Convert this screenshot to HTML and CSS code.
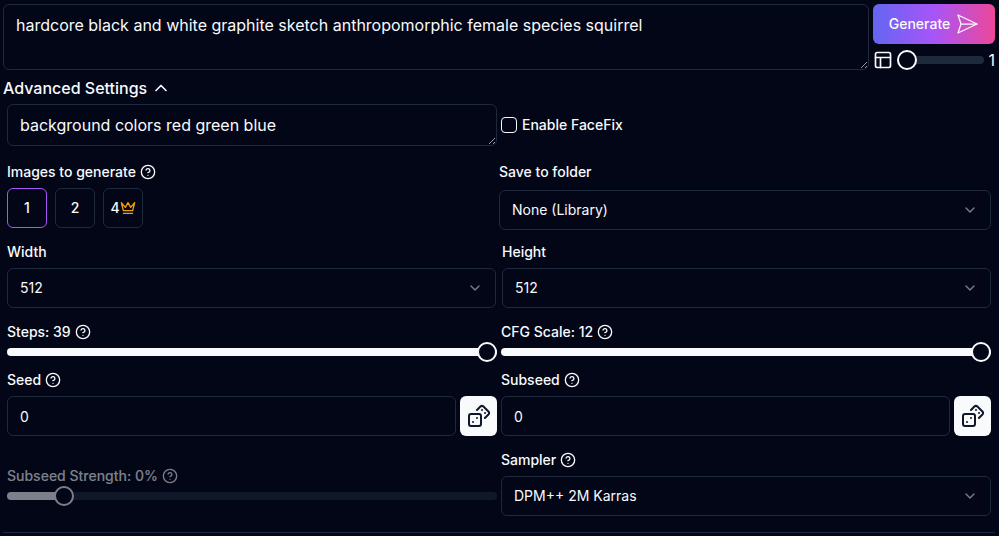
FILE: index.html
```
<!DOCTYPE html>
<html lang="en">
<head>
    <meta charset="UTF-8">
    <meta name="viewport" content="width=device-width, initial-scale=1.0">
    <title>Generate Images</title>
    <link rel="stylesheet" href="styles.css">
</head>
<body>

    <!-- shared icons -->
    <svg class="sprite" aria-hidden="true">
        <symbol id="icon-help" viewBox="0 0 24 24">
            <circle cx="12" cy="12" r="10"/>
            <path d="M9.09 9a3 3 0 0 1 5.83 1c0 2-3 3-3 3"/>
            <path d="M12 17h.01"/>
        </symbol>
        <symbol id="icon-down" viewBox="0 0 24 24">
            <path d="m6 9 6 6 6-6"/>
        </symbol>
        <symbol id="icon-dice" viewBox="0 0 24 24">
            <rect x="2" y="10" width="12" height="12" rx="2"/>
            <path d="m17.92 14 3.5-3.5a2.24 2.24 0 0 0 0-3l-5-4.92a2.24 2.24 0 0 0-3 0L10 6"/>
            <path d="M6 18h.01M10 14h.01M15 6h.01M18 9h.01"/>
        </symbol>
    </svg>

    <form class="generator">
        <!-- prompt start -->
        <div class="prompt">
            <textarea class="field prompt-text" rows="2" aria-label="Prompt" spellcheck="false">hardcore black and white graphite sketch anthropomorphic female species squirrel</textarea>
            <div class="prompt-side">
                <button type="button" class="generate">
                    Generate
                    <svg class="icon icon-send" viewBox="0 0 24 24"><path d="m3 3 3 9-3 9 19-9Z"/><path d="M6 12h16"/></svg>
                </button>
                <div class="columns-picker">
                    <svg class="icon icon-md" viewBox="0 0 24 24"><rect x="3" y="3" width="18" height="18" rx="2"/><path d="M3 9h18M9 21V9"/></svg>
                    <input type="range" class="slider" id="columns" aria-label="Columns" min="1" max="8" value="1" style="--fill: 0%">
                    <output for="columns">1</output>
                </div>
            </div>
        </div>
        <!-- prompt end -->

        <button type="button" class="toggle" aria-expanded="true">
            Advanced Settings
            <svg class="icon icon-md" viewBox="0 0 24 24"><path d="m18 15-6-6-6 6"/></svg>
        </button>

        <!-- settings start -->
        <div class="settings">
            <div class="row">
                <textarea class="field" rows="1" aria-label="Negative prompt" spellcheck="false">background colors red green blue</textarea>
                <div class="check">
                    <input type="checkbox" id="facefix">
                    <label for="facefix">Enable FaceFix</label>
                </div>
            </div>

            <div class="row row-folder">
                <div class="group">
                    <div class="label" id="count-label">Images to generate <svg class="icon icon-sm"><use href="#icon-help"/></svg></div>
                    <div class="counts" role="group" aria-labelledby="count-label">
                        <button type="button" class="count active">1</button>
                        <button type="button" class="count">2</button>
                        <button type="button" class="count">4<svg class="icon icon-sm crown" viewBox="0 0 24 24"><path d="m2 4 3 12h14l3-12-6 7-4-7-4 7-6-7zm3 16h14"/></svg></button>
                    </div>
                </div>
                <div class="group group-folder">
                    <label class="label" for="folder">Save to folder</label>
                    <div class="select">
                        <select class="field" id="folder"><option>None (Library)</option></select>
                        <svg class="icon icon-sm"><use href="#icon-down"/></svg>
                    </div>
                </div>
            </div>

            <div class="row row-size">
                <div class="group">
                    <label class="label" for="width">Width</label>
                    <div class="select">
                        <select class="field" id="width"><option>512</option></select>
                        <svg class="icon icon-sm"><use href="#icon-down"/></svg>
                    </div>
                </div>
                <div class="group">
                    <label class="label" for="height">Height</label>
                    <div class="select">
                        <select class="field" id="height"><option>512</option></select>
                        <svg class="icon icon-sm"><use href="#icon-down"/></svg>
                    </div>
                </div>
            </div>

            <div class="row row-sliders">
                <div>
                    <label class="label" for="steps">Steps: 39 <svg class="icon icon-sm"><use href="#icon-help"/></svg></label>
                    <input type="range" class="slider" id="steps" min="1" max="39" value="39" style="--fill: 100%">
                </div>
                <div>
                    <label class="label" for="cfg">CFG Scale: 12 <svg class="icon icon-sm"><use href="#icon-help"/></svg></label>
                    <input type="range" class="slider" id="cfg" min="1" max="12" value="12" style="--fill: 100%">
                </div>
            </div>

            <div class="row row-seeds">
                <div class="group">
                    <label class="label" for="seed">Seed <svg class="icon icon-sm"><use href="#icon-help"/></svg></label>
                    <div class="seed">
                        <input type="text" class="field" id="seed" value="0">
                        <button type="button" class="dice" aria-label="Random seed"><svg class="icon"><use href="#icon-dice"/></svg></button>
                    </div>
                </div>
                <div class="group">
                    <label class="label" for="subseed">Subseed <svg class="icon icon-sm"><use href="#icon-help"/></svg></label>
                    <div class="seed">
                        <input type="text" class="field" id="subseed" value="0">
                        <button type="button" class="dice" aria-label="Random subseed"><svg class="icon"><use href="#icon-dice"/></svg></button>
                    </div>
                </div>
            </div>

            <div class="row row-sampler">
                <div class="disabled">
                    <label class="label" for="strength">Subseed Strength: 0% <svg class="icon icon-sm"><use href="#icon-help"/></svg></label>
                    <input type="range" class="slider" id="strength" min="-10" max="90" value="0" style="--fill: 11%" disabled>
                </div>
                <div class="group">
                    <label class="label" for="sampler">Sampler <svg class="icon icon-sm"><use href="#icon-help"/></svg></label>
                    <div class="select">
                        <select class="field" id="sampler"><option>DPM++ 2M Karras</option></select>
                        <svg class="icon icon-sm"><use href="#icon-down"/></svg>
                    </div>
                </div>
            </div>
        </div>
        <!-- settings end -->
    </form>

</body>
</html>
```
FILE: styles.css
```
:root {
    --bg: #020617;
    --text: #f8fafc;
    --border: #1e293b;
}

* {
    box-sizing: border-box;
}

body {
    margin: 0;
    background-color: var(--bg);
    color: var(--text);
    font-family: Inter, sans-serif;
    font-size: 14px;
    line-height: 20px;
}

button,
input,
select,
textarea {
    margin: 0;
    font-family: inherit;
    font-size: inherit;
    line-height: inherit;
    color: inherit;
}

button {
    padding: 0;
    border: none;
    background: none;
    font-weight: 500;
    cursor: pointer;
}

.sprite {
    display: none;
}

.icon {
    width: 24px;
    height: 24px;
    flex: none;
    fill: none;
    stroke: currentColor;
    stroke-width: 2;
    stroke-linecap: round;
    stroke-linejoin: round;
}

.icon-md {
    width: 20px;
    height: 20px;
}

.icon-sm {
    width: 16px;
    height: 16px;
}

.generator {
    padding: 4px 4px 0 3px;
}

/* form fields */

.field {
    display: block;
    width: 100%;
    min-width: 0;
    height: 40px;
    padding: 8px 12px;
    border: 1px solid var(--border);
    border-radius: 6px;
    background-color: transparent;
}

textarea.field {
    height: auto;
    font-size: 16px;
    line-height: 24px;
    resize: vertical;
}

select.field {
    appearance: none;
}

.select {
    position: relative;
}

.select .icon {
    position: absolute;
    top: 12px;
    right: 13px;
    opacity: 0.5;
    pointer-events: none;
}

.label {
    display: flex;
    align-items: center;
    gap: 4px;
    font-weight: 500;
}

.slider {
    display: block;
    width: 100%;
    min-width: 0;
    height: 20px;
    appearance: none;
    background: none;
}

.slider::-webkit-slider-runnable-track {
    height: 8px;
    border-radius: 4px;
    background: linear-gradient(to right, var(--text) var(--fill), var(--border) var(--fill));
}

.slider::-webkit-slider-thumb {
    appearance: none;
    width: 20px;
    height: 20px;
    margin-top: -6px;
    border: 2px solid var(--text);
    border-radius: 50%;
    background-color: var(--bg);
}

/* prompt */

.prompt {
    display: flex;
    align-items: flex-start;
    gap: 4px;
}

.prompt-text {
    flex: 1;
}

.prompt-side {
    width: 122px;
}

.generate {
    display: flex;
    align-items: center;
    justify-content: center;
    gap: 5px;
    width: 100%;
    height: 40px;
    border-radius: 6px;
    background: linear-gradient(to right, #6366f1, #a855f7, #ec4899);
}

.icon-send {
    stroke-width: 1.25;
}

.columns-picker {
    display: flex;
    align-items: center;
    gap: 4px;
    margin-top: 4px;
    font-size: 16px;
    line-height: 24px;
}

.toggle {
    display: flex;
    align-items: center;
    gap: 4px;
    margin: 4px 0;
    font-size: 16px;
    line-height: 24px;
}

/* settings */

.settings {
    padding: 0 4px 16px;
    border-bottom: 1px solid var(--border);
}

.row {
    display: grid;
    grid-template-columns: 1fr 1fr;
    column-gap: 4px;
}

.group {
    display: grid;
    align-content: start;
    gap: 6px;
}

.group-folder {
    gap: 8px;
}

.row-folder {
    column-gap: 0;
    margin-top: 16px;
}

.row-size {
    column-gap: 6px;
    margin-top: 12px;
}

.row-sliders {
    margin-top: 14px;
}

.row-seeds {
    margin-top: 8px;
}

.row-sampler {
    margin-top: 14px;
}

.check {
    display: flex;
    align-items: center;
    gap: 5px;
    font-weight: 500;
}

.check input {
    width: 16px;
    height: 16px;
    appearance: none;
    border: 1px solid var(--text);
    border-radius: 4px;
}

.check input:checked {
    background-color: var(--text);
}

.counts {
    display: flex;
    gap: 8px;
}

.count {
    display: flex;
    align-items: center;
    justify-content: center;
    width: 40px;
    height: 40px;
    border: 1px solid var(--border);
    border-radius: 6px;
}

.count.active {
    border-color: #a855f7;
}

.crown {
    color: #f59e0b;
}

.seed {
    display: flex;
    gap: 4px;
}

.dice {
    display: flex;
    align-items: center;
    justify-content: center;
    flex: none;
    width: 37px;
    height: 40px;
    border-radius: 6px;
    background-color: var(--text);
    color: #0f172a;
}

.disabled {
    align-self: end;
    padding-bottom: 10px;
    opacity: 0.5;
}

@media (max-width: 575px) {
    .prompt {
        flex-direction: column;
    }

    .prompt-side {
        width: 100%;
    }

    .row {
        grid-template-columns: 1fr;
        row-gap: 12px;
    }
}
```
